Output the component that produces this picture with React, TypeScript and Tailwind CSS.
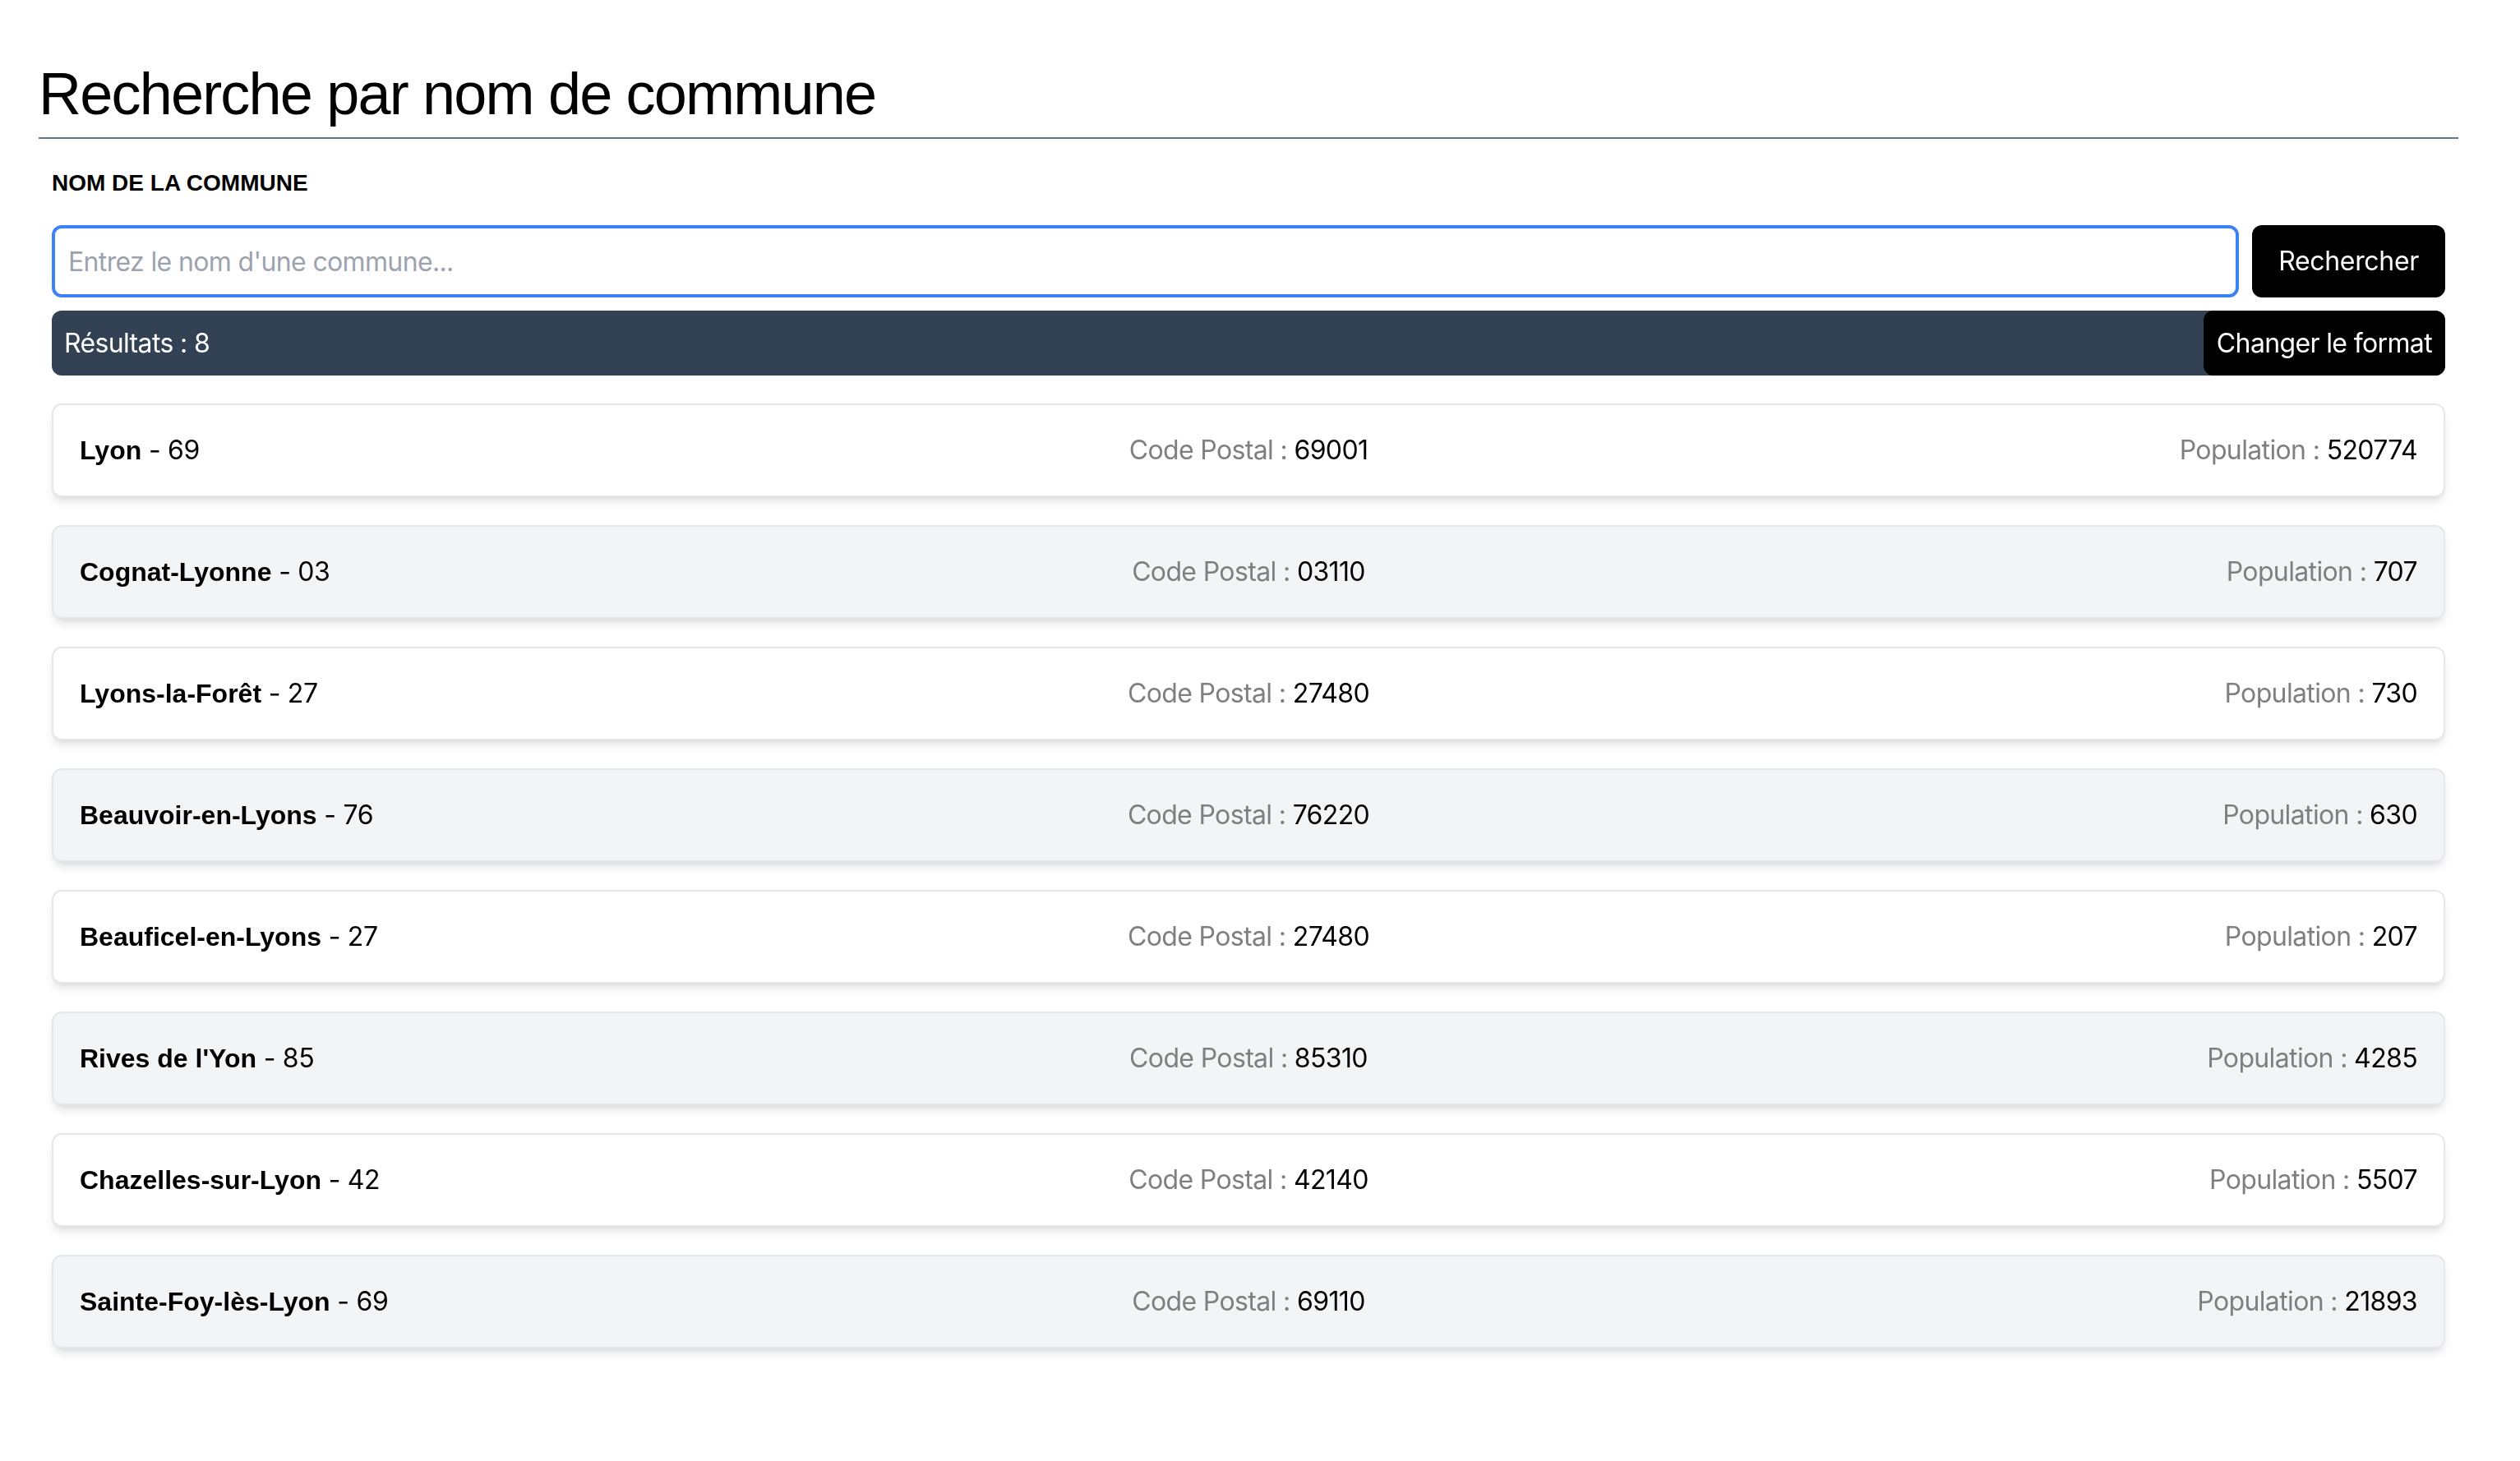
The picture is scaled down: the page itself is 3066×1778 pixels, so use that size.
import React from "react";

type Commune = {
  nom: string;
  dep: string;
  cp: string;
  population: number;
};

const communes: Commune[] = [
  { nom: "Lyon", dep: "69", cp: "69001", population: 520774 },
  { nom: "Cognat-Lyonne", dep: "03", cp: "03110", population: 707 },
  { nom: "Lyons-la-Forêt", dep: "27", cp: "27480", population: 730 },
  { nom: "Beauvoir-en-Lyons", dep: "76", cp: "76220", population: 630 },
  { nom: "Beauficel-en-Lyons", dep: "27", cp: "27480", population: 207 },
  { nom: "Rives de l'Yon", dep: "85", cp: "85310", population: 4285 },
  { nom: "Chazelles-sur-Lyon", dep: "42", cp: "42140", population: 5507 },
  { nom: "Sainte-Foy-lès-Lyon", dep: "69", cp: "69110", population: 21893 },
];

const CommuneItem = ({ commune, odd }: { commune: Commune; odd: boolean }) => {
  return (
    <div
      className={`grid h-[114px] grid-cols-3 items-center rounded-[12px] border-2 border-[#e5e7eb] px-[32px] text-[32px] shadow-[0_8px_12px_-2px_rgba(0,0,0,0.1),0_4px_8px_-4px_rgba(0,0,0,0.1)] ${
        odd ? "bg-[#f3f4f6]" : "bg-white"
      }`}
    >
      {/* nom + département */}
      <div className="font-['Liberation_Sans',sans-serif] text-black">
        <span className="font-bold">{commune.nom}</span>
        <span className="font-['Inter',sans-serif] tracking-[-0.01em]"> - {commune.dep}</span>
      </div>
      {/* code postal */}
      <div className="text-center font-['Inter',sans-serif] tracking-[-0.02em]">
        <span className="text-[#7f7f7f]">Code Postal : </span>
        <span className="text-black">{commune.cp}</span>
      </div>
      {/* population */}
      <div className="text-right font-['Inter',sans-serif] tracking-[-0.02em]">
        <span className="text-[#7f7f7f]">Population : </span>
        <span className="text-black">{commune.population}</span>
      </div>
    </div>
  );
};

const App = () => {
  return (
    <div className="min-h-screen bg-white pb-[100px] pl-[47px] pr-[75px] pt-[74px]">
      <h1 className="border-b-2 border-[#6b7280] pb-[13px] font-['Liberation_Sans',sans-serif] text-[72px] leading-[80px] tracking-[-0.025em] text-black">
        Recherche par nom de commune
      </h1>

      <div className="px-[16px]">
        <label className="mb-[31px] mt-[34px] block font-['Liberation_Sans',sans-serif] text-[28px] font-bold uppercase leading-[40px] text-black">
          Nom de la commune
        </label>

        <div className="flex gap-[16px] font-['Inter',sans-serif] tracking-[-0.02em]">
          <input
            type="text"
            autoFocus
            placeholder="Entrez le nom d'une commune..."
            className="h-[88px] flex-1 rounded-[12px] border-4 border-[#3b82f6] bg-white pl-[16px] text-[32px] tracking-[-0.02em] text-black caret-black outline-none placeholder:text-[#9ca3af]"
          />
          <button className="h-[88px] rounded-[12px] bg-black px-[32px] text-[32px] text-white">
            Rechercher
          </button>
        </div>

        <div className="mt-[16px] flex h-[79px] items-center justify-between rounded-[12px] bg-[#334155] font-['Inter',sans-serif] text-[32px] tracking-[-0.02em] text-white">
          <span className="pl-[15px]">Résultats : {communes.length}</span>
          <button className="h-full rounded-[12px] bg-black px-[16px] text-white">
            Changer le format
          </button>
        </div>

        <div className="mt-[34px] flex flex-col gap-[34px]">
          {communes.map((c, i) => (
            <CommuneItem key={c.nom} commune={c} odd={i % 2 === 1} />
          ))}
        </div>
      </div>
    </div>
  );
};

export default App;
